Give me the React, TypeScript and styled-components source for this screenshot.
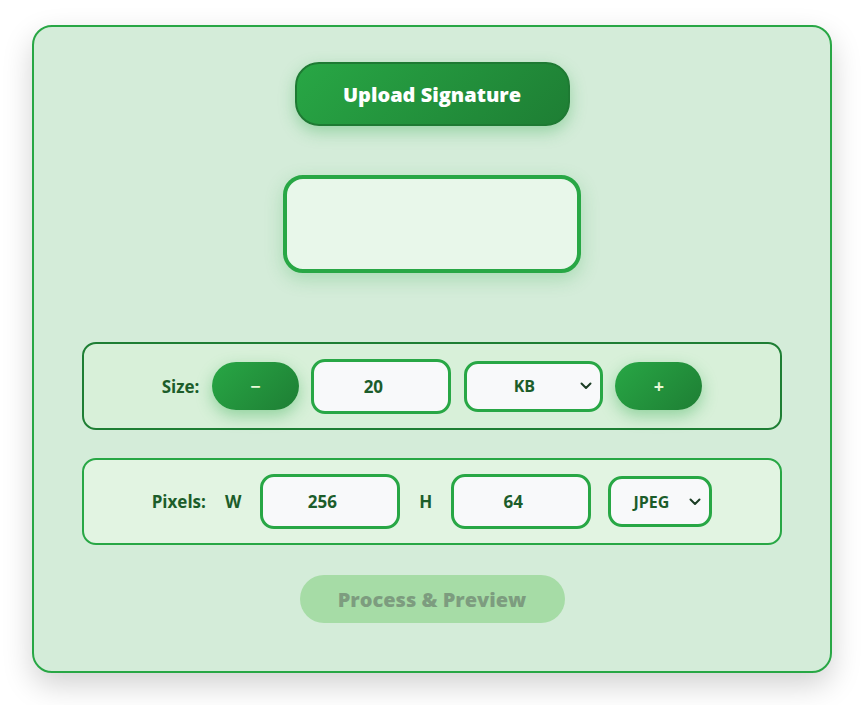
import React from "react";
import styled, { createGlobalStyle } from "styled-components";

const Global = createGlobalStyle`
  html, body { margin: 0; padding: 0; background: #ffffff; }
  body { font-family: "Open Sans", "Noto Sans", "Liberation Sans", sans-serif; }
  * { box-sizing: border-box; }
`;

const Page = styled.div`
  width: 864px;
  height: 705px;
  padding: 25px 32px 0;
`;

const Card = styled.div`
  width: 800px;
  height: 648px;
  background: #d4ecd9;
  border: 2px solid #28a745;
  border-radius: 20px;
  box-shadow: 0 12px 30px rgba(0, 0, 0, 0.18);
  display: flex;
  flex-direction: column;
  align-items: center;
  padding-top: 35px;
`;

const UploadButton = styled.button`
  width: 275px;
  height: 64px;
  border-radius: 24px;
  border: 2px solid #1e7a33;
  background: linear-gradient(135deg, #28a745 0%, #1e7e34 100%);
  color: #ffffff;
  font-family: inherit;
  font-weight: 800;
  font-size: 20px;
  box-shadow: 0 6px 16px rgba(40, 167, 69, 0.35);
  cursor: pointer;
`;

const Preview = styled.div`
  margin-top: 49px;
  width: 298px;
  height: 98px;
  border: 4px solid #28a745;
  border-radius: 20px;
  background: #e8f7ea;
  box-shadow: 0 6px 18px rgba(40, 167, 69, 0.25);
`;

const Row = styled.div<{ $variant: "size" | "pixels"; $top: number }>`
  margin-top: ${(p) => p.$top}px;
  width: 700px;
  height: ${(p) => (p.$variant === "size" ? 88 : 87)}px;
  border: 2px solid ${(p) => (p.$variant === "size" ? "#1e7e34" : "#28a745")};
  border-radius: 14px;
  background: ${(p) => (p.$variant === "size" ? "#d8f0d9" : "#e2f4e2")};
  display: flex;
  align-items: center;
  justify-content: center;
  gap: ${(p) => (p.$variant === "size" ? 12.5 : 17)}px;
`;

const Label = styled.span`
  color: #1c5d2a;
  font-weight: 700;
  font-size: 17px;
`;

const AxisLabel = styled.span`
  color: #1c5d2a;
  font-weight: 700;
  font-size: 17px;
  padding: 0 2px;
`;

const StepButton = styled.button`
  width: 87px;
  height: 48px;
  border: none;
  border-radius: 24px;
  background: linear-gradient(135deg, #28a745 0%, #1e7e34 100%);
  color: #eaf9d8;
  font-family: inherit;
  font-weight: 700;
  font-size: 18px;
  box-shadow: 0 6px 16px rgba(40, 167, 69, 0.4);
  cursor: pointer;
`;

const NumberInput = styled.input`
  width: 140px;
  height: 55px;
  border: 3px solid #28a745;
  border-radius: 14px;
  background: #f8f9fa;
  color: #1c5d2a;
  font-family: inherit;
  font-weight: 700;
  font-size: 17px;
  text-align: center;
  padding: 0 16px 0 0;
  outline: none;
  &::-webkit-inner-spin-button,
  &::-webkit-outer-spin-button {
    -webkit-appearance: none;
    margin: 0;
  }
  -moz-appearance: textfield;
`;

const SelectWrap = styled.div<{ $w: number; $h: number }>`
  position: relative;
  width: ${(p) => p.$w}px;
  height: ${(p) => p.$h}px;
`;

const Select = styled.select<{ $pad: number }>`
  appearance: none;
  width: 100%;
  height: 100%;
  border: 3px solid #28a745;
  border-radius: 14px;
  background: #f8f9fa;
  color: #1c5d2a;
  font-family: inherit;
  font-weight: 700;
  font-size: 16px;
  text-align: center;
  text-align-last: center;
  padding: 0 ${(p) => p.$pad}px 0 0;
  outline: none;
`;

const Chevron = styled.svg`
  position: absolute;
  right: 11px;
  top: 50%;
  margin-top: -4px;
  pointer-events: none;
`;

const ProcessButton = styled.button`
  margin-top: 30px;
  width: 265px;
  height: 48px;
  border: none;
  border-radius: 24px;
  background: #a6dca6;
  color: #7d9c7f;
  font-family: inherit;
  font-weight: 800;
  font-size: 20px;
`;

const Arrow = () => (
  <Chevron width="12" height="8" viewBox="0 0 12 8">
    <path d="M1.5 1.5 L6 6 L10.5 1.5" fill="none" stroke="#1c3d24" strokeWidth="2" strokeLinecap="round" strokeLinejoin="round" />
  </Chevron>
);

export default function App() {
  return (
    <>
      <Global />
      <Page>
        <Card>
          <UploadButton>Upload Signature</UploadButton>
          <Preview />
          <Row $variant="size" $top={69}>
            <Label>Size:</Label>
            <StepButton>−</StepButton>
            <NumberInput type="number" defaultValue="20" />
            <SelectWrap $w={139} $h={51}>
              <Select $pad={18} defaultValue="KB">
                <option>KB</option>
                <option>MB</option>
              </Select>
              <Arrow />
            </SelectWrap>
            <StepButton>+</StepButton>
          </Row>
          <Row $variant="pixels" $top={28}>
            <Label>Pixels:</Label>
            <AxisLabel>W</AxisLabel>
            <NumberInput type="number" defaultValue="256" />
            <AxisLabel>H</AxisLabel>
            <NumberInput type="number" defaultValue="64" />
            <SelectWrap $w={104} $h={51}>
              <Select $pad={18} defaultValue="JPEG">
                <option>JPEG</option>
                <option>PNG</option>
              </Select>
              <Arrow />
            </SelectWrap>
          </Row>
          <ProcessButton disabled>Process &amp; Preview</ProcessButton>
        </Card>
      </Page>
    </>
  );
}
